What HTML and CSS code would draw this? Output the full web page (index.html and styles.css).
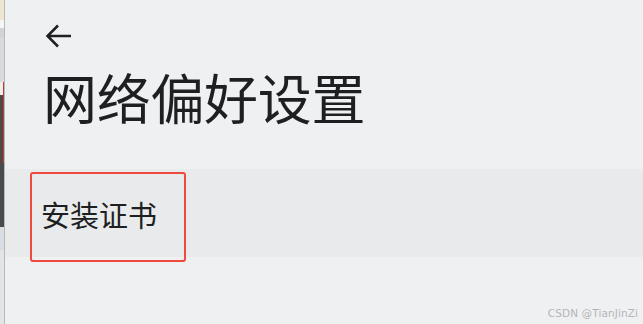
FILE: index.html
```html
<!DOCTYPE html>
<html lang="zh-CN">
<head>
<meta charset="utf-8">
<title>网络偏好设置</title>
<link rel="stylesheet" href="styles.css">
</head>
<body>
<div class="screen">
  <div class="side">
    <div class="seg s1"></div>
    <div class="seg s2"></div>
    <div class="seg s3"></div>
    <div class="seg s4"></div>
    <div class="seg s5"></div>
    <div class="seg s6"></div>
    <div class="seg s7"></div>
    <div class="seg s8"></div>
    <div class="seg s9"></div>
  </div>
  <main class="main">
    <div class="topbar">
      <svg class="back" width="28" height="28" viewBox="0 0 28 28" aria-label="返回">
        <path d="M26 14H3.5M13 3.5L2.5 14L13 24.5" fill="none" stroke="#1f1f1f" stroke-width="2.5" stroke-linecap="butt" stroke-linejoin="miter"/>
      </svg>
    </div>
    <h1 class="title">网络偏好设置</h1>
    <div class="row">
      <span class="row-label">安装证书</span>
      <div class="highlight"></div>
    </div>
    <div class="watermark">CSDN @TianJinZi</div>
  </main>
</div>
</body>
</html>
```

FILE: styles.css
```css
html, body {
  margin: 0;
  padding: 0;
  width: 643px;
  height: 324px;
  overflow: hidden;
}

.screen {
  display: flex;
  width: 643px;
  height: 324px;
  font-family: "Noto Sans CJK SC", "Noto Sans", sans-serif;
}

.side {
  width: 4px;
  border-right: 1px solid #b9b9b9;
  display: flex;
  flex-direction: column;
}

.seg { flex: none; }
.s1 { height: 20px; background: #ece6d2; }
.s2 { height: 8px; background: #f6f6f6; }
.s3 { height: 10px; background: #d3d3d3; }
.s4 { height: 44px; background: #dadadc; }
.s5 { height: 13px; background: #efefef; box-shadow: inset -1px 0 0 #c0392b; }
.s6 { height: 68px; background: #4a4a4a; box-shadow: inset -1px 0 0 #c0392b; }
.s7 { height: 64px; background: #4a4a4a; }
.s8 { height: 23px; background: #d8dde3; }
.s9 { flex: 1; background: #e4e4e4; }

.main {
  position: relative;
  flex: 1;
  background: #eff0f2;
  display: flex;
  flex-direction: column;
}

.topbar {
  padding: 22px 0 0 40px;
  height: 28px;
}

.back {
  display: block;
}

.title {
  margin: 20px 0 0 38px;
  font-size: 54px;
  line-height: 54px;
  font-weight: 400;
  color: #1e1f21;
  letter-spacing: -0.3px;
}

.row {
  position: relative;
  margin-top: 45px;
  height: 88px;
  background: #e9eaec;
  display: flex;
  align-items: center;
  padding-left: 36px;
}

.row-label {
  font-size: 29px;
  line-height: 1;
  color: #1e1f21;
  margin-top: 2px;
}

.highlight {
  position: absolute;
  left: 25px;
  top: 3px;
  width: 152px;
  height: 86px;
  border: 2px solid #ee4a3d;
  border-radius: 3px;
}

.watermark {
  position: absolute;
  right: 5px;
  bottom: 5px;
  font-family: "DejaVu Sans", sans-serif;
  font-size: 10.5px;
  letter-spacing: 0.1px;
  color: #b4b5b8;
}
```
